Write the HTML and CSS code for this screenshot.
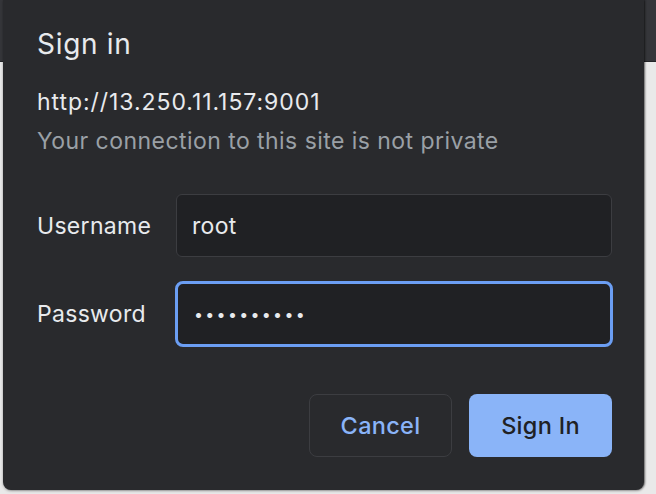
FILE: index.html
```html
<!DOCTYPE html>
<html>
<head>
<meta charset="utf-8">
<link rel="stylesheet" href="styles.css">
</head>
<body>
<div class="toolbar"></div>
<div class="page"></div>
<div class="dialog">
  <h1 class="title">Sign in</h1>
  <div class="origin">http://13.250.11.157:9001</div>
  <div class="warning">Your connection to this site is not private</div>
  <div class="form">
    <label class="label">Username</label>
    <div class="input">root</div>
    <label class="label">Password</label>
    <div class="input focused"><span class="dots">••••••••••</span></div>
  </div>
  <div class="actions">
    <div class="btn cancel">Cancel</div>
    <div class="btn primary">Sign In</div>
  </div>
</div>
</body>
</html>
```
FILE: styles.css
```css
html, body {
  margin: 0;
  padding: 0;
  width: 656px;
  height: 494px;
  overflow: hidden;
  background: #e9e9e9;
  font-family: Inter, "Liberation Sans", sans-serif;
}
.toolbar {
  height: 61px;
  background: #35363a;
  border-bottom: 1px solid #232427;
}
.dialog {
  position: absolute;
  left: 3px;
  top: 0;
  width: 641px;
  height: 490px;
  box-sizing: border-box;
  background: #292a2d;
  border-radius: 0 0 8px 8px;
  box-shadow: 1px 0 2px rgba(0,0,0,0.5), 0 1px 3px rgba(0,0,0,0.25);
  padding: 27px 32px 0 34px;
  color: #e8eaed;
}
.title {
  margin: 0;
  font-size: 28px;
  font-weight: 400;
  line-height: 34px;
  letter-spacing: 0.7px;
  color: #e8eaed;
}
.origin {
  margin-top: 27px;
  font-size: 23px;
  line-height: 28px;
  letter-spacing: 0.95px;
  color: #e8eaed;
}
.warning {
  margin-top: 11px;
  font-size: 23px;
  line-height: 28px;
  letter-spacing: 0.45px;
  color: #9aa0a6;
}
.form {
  margin-top: 39px;
  display: grid;
  grid-template-columns: 139px 436px;
  row-gap: 24px;
  align-items: center;
}
.label {
  font-size: 23px;
  letter-spacing: 0.3px;
  color: #e8eaed;
}
.input {
  height: 63px;
  box-sizing: border-box;
  border: 1px solid #3c3d41;
  border-radius: 6px;
  background: #202124;
  display: flex;
  align-items: center;
  padding-left: 15px;
  font-size: 23px;
  letter-spacing: 0.3px;
  color: #e8eaed;
}
.input.focused {
  height: 66px;
  margin-left: -1px;
  margin-right: -1px;
  border: 3px solid #6b9ef3;
  border-radius: 8px;
  padding-left: 16px;
}
.dots {
  font-size: 16px;
  letter-spacing: 2.3px;
}
.actions {
  margin-top: 47px;
  display: flex;
  justify-content: flex-end;
  gap: 17px;
}
.btn {
  width: 143px;
  height: 63px;
  box-sizing: border-box;
  border-radius: 8px;
  display: flex;
  align-items: center;
  justify-content: center;
  font-size: 23.5px;
  font-weight: 500;
  letter-spacing: 0.3px;
}
.cancel {
  border: 1px solid #3c3d41;
  color: #8ab4f8;
}
.primary {
  background: #8ab4f8;
  color: #202124;
}
```
